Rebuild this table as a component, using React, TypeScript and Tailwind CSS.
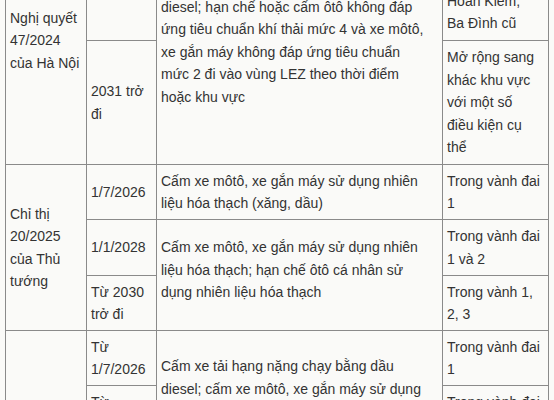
import React from "react";

type CellProps = {
  cls: string;
  lines: string[];
  pad?: string;
};

function Cell({ cls, lines, pad }: CellProps) {
  return (
    <div
      className={`${cls} flex flex-col border-r border-b border-[#8a8a8a] px-[4px] ${
        pad ? pad + " justify-start" : "justify-center"
      }`}
    >
      <div className="whitespace-nowrap">
        {lines.map((l, i) => (
          <div key={i}>{l}</div>
        ))}
      </div>
    </div>
  );
}

export default function App() {
  return (
    <div className="w-[554px] h-[400px] overflow-hidden bg-[#fafaf8] font-['Liberation_Sans',Arial,sans-serif] text-[14px] leading-[22.5px] text-[#333]">
      <div className="mt-[-84px] ml-[5px] w-max grid grid-cols-[81px_70px_286px_106px] grid-rows-[124px_124px_55px_56px_55px_55px_55px_55px] border-l border-t border-[#8a8a8a]">
        <Cell cls="col-start-1 row-start-1 row-span-2" lines={["Nghị quyết", "47/2024", "của Hà Nội"]} />
        <Cell cls="col-start-2 row-start-1" lines={["2028 - 2030"]} />
        <Cell
          cls="col-start-3 row-start-1 row-span-2"
          lines={[
            "Hạn chế xe tải hạng nặng chạy bằng dầu",
            "diesel; hạn chế hoặc cấm ôtô không đáp",
            "ứng tiêu chuẩn khí thải mức 4 và xe môtô,",
            "xe gắn máy không đáp ứng tiêu chuẩn",
            "mức 2 đi vào vùng LEZ theo thời điểm",
            "hoặc khu vực",
          ]}
        />
        <Cell
          cls="col-start-4 row-start-1"
          lines={["Thí điểm tại", "một số phường", "thuộc quận", "Hoàn Kiếm,", "Ba Đình cũ"]}
        />
        <Cell cls="col-start-2 row-start-2" lines={["2031 trở", "đi"]} />
        <Cell
          cls="col-start-4 row-start-2"
          lines={["Mở rộng sang", "khác khu vực", "với một số", "điều kiện cụ", "thể"]}
        />

        <Cell cls="col-start-1 row-start-3 row-span-3" lines={["Chỉ thị", "20/2025", "của Thủ", "tướng"]} />
        <Cell cls="col-start-2 row-start-3" lines={["1/7/2026"]} />
        <Cell
          cls="col-start-3 row-start-3"
          lines={["Cấm xe môtô, xe gắn máy sử dụng nhiên", "liệu hóa thạch (xăng, dầu)"]}
        />
        <Cell cls="col-start-4 row-start-3" lines={["Trong vành đai", "1"]} />
        <Cell cls="col-start-2 row-start-4" lines={["1/1/2028"]} />
        <Cell
          cls="col-start-3 row-start-4 row-span-2"
          pad="pt-[16px]"
          lines={[
            "Cấm xe môtô, xe gắn máy sử dụng nhiên",
            "liệu hóa thạch; hạn chế ôtô cá nhân sử",
            "dụng nhiên liệu hóa thạch",
          ]}
        />
        <Cell cls="col-start-4 row-start-4" lines={["Trong vành đai", "1 và 2"]} />
        <Cell cls="col-start-2 row-start-5" lines={["Từ 2030", "trở đi"]} />
        <Cell cls="col-start-4 row-start-5" lines={["Trong vành 1,", "2, 3"]} />

        <Cell cls="col-start-1 row-start-6 row-span-3" lines={[""]} />
        <Cell cls="col-start-2 row-start-6" lines={["Từ", "1/7/2026"]} />
        <Cell
          cls="col-start-3 row-start-6 row-span-3"
          pad="pt-[24px]"
          lines={[
            "Cấm xe tải hạng nặng chạy bằng dầu",
            "diesel; cấm xe môtô, xe gắn máy sử dụng",
            "nhiên liệu hóa thạch",
          ]}
        />
        <Cell cls="col-start-4 row-start-6" lines={["Trong vành đai", "1"]} />
        <Cell cls="col-start-2 row-start-7" lines={["Từ", "1/1/2028"]} />
        <Cell cls="col-start-4 row-start-7" lines={["Trong vành đai", "1 và 2"]} />
        <Cell cls="col-start-2 row-start-8" lines={["Từ 2030"]} />
        <Cell cls="col-start-4 row-start-8" lines={["Trong vành 1,", "2, 3"]} />
      </div>
    </div>
  );
}
